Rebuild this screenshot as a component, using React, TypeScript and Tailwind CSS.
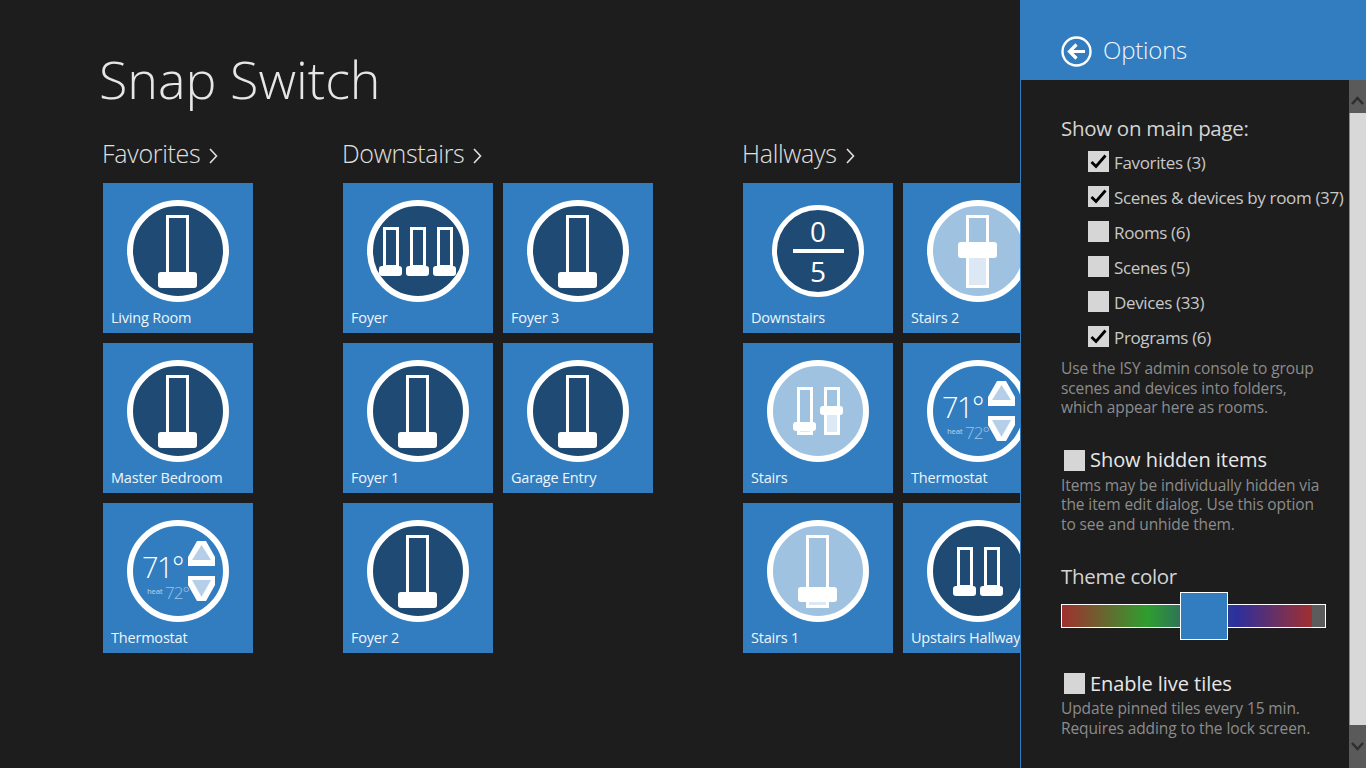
import React from 'react';

const BLUE = '#317dc0';
const DARK = '#1f4a73';
const LIGHT = '#a0c2e1';
const PALE = '#dce8f4';

type Slider = { x: number; w: number; top: number; bottom: number; hx: number; hw: number; hy: number; hh: number; fillBelow?: boolean };

// one track with its handle, in the 102x102 dial space
const Track = ({ s }: { s: Slider }) => (
    <>
        {s.fillBelow && <rect x={s.x} y={s.hy} width={s.w} height={s.bottom - s.hy} fill={PALE} />}
        <rect x={s.x + 1.5} y={s.top + 1.5} width={s.w - 3} height={s.bottom - s.top - 3} fill="none" stroke="#fff" strokeWidth="3" />
        <rect x={s.hx} y={s.hy} width={s.hw} height={s.hh} rx="3" fill="#fff" />
    </>
);

const Dial = ({ fill, children }: { fill: string; children?: React.ReactNode }) => (
    <svg width="102" height="102" viewBox="0 0 102 102" className="shrink-0">
        <circle cx="51" cy="51" r="48" fill={fill} stroke="#fff" strokeWidth="6" />
        {children}
    </svg>
);

const single = (extra: Partial<Slider>): Slider => ({ x: 39, w: 23, top: 15, bottom: 88, hx: 31, hw: 39, hy: 72, hh: 16, ...extra });
const small = (x: number, hy: number, hh: number, extra?: Partial<Slider>): Slider => ({
    x, w: 16, top: 27, bottom: 68, hx: x - 4, hw: 23, hy, hh, ...extra,
});

const SwitchOff = () => (
    <Dial fill={DARK}>
        <Track s={single({})} />
    </Dial>
);

const Triple = () => (
    <Dial fill={DARK}>
        <Track s={small(16, 66, 10)} />
        <Track s={{ ...small(43, 66, 10), hx: 39 }} />
        <Track s={small(70, 66, 10)} />
    </Dial>
);

const Double = () => (
    <Dial fill={DARK}>
        <Track s={small(30, 66, 10)} />
        <Track s={small(57, 66, 10)} />
    </Dial>
);

const Count = () => (
    <svg width="102" height="102" viewBox="0 0 102 102" className="shrink-0">
        <circle cx="51" cy="51" r="43.5" fill={DARK} stroke="#fff" strokeWidth="5" />
        <rect x="26" y="49" width="51" height="4" fill="#fff" />
        <text x="51" y="42" textAnchor="middle" fill="#fff" fontSize="28">0</text>
        <text x="51" y="82" textAnchor="middle" fill="#fff" fontSize="28">5</text>
    </svg>
);

const DimMid = () => (
    <Dial fill={LIGHT}>
        <Track s={single({ hy: 42, hh: 16, fillBelow: true })} />
    </Dial>
);

const DimLow = () => (
    <Dial fill={LIGHT}>
        <Track s={single({ hy: 67, hh: 15, fillBelow: true })} />
    </Dial>
);

const DimPair = () => (
    <Dial fill={LIGHT}>
        <Track s={{ ...small(30, 62, 9), bottom: 75, fillBelow: true }} />
        <Track s={{ ...small(57, 46, 9), bottom: 75, fillBelow: true }} />
    </Dial>
);

const Thermo = () => (
    <Dial fill={BLUE}>
        <text x="15" y="58" fill="#fff" fontSize="29" fontWeight="300" letterSpacing="-1.6">71°</text>
        <text x="20" y="74" fill={LIGHT} fontSize="7.5" fontWeight="600" letterSpacing="-0.2">heat</text>
        <text x="38" y="79" fill={LIGHT} fontSize="17" fontWeight="300" letterSpacing="-0.9">72°</text>
        <path d="M61 46 V37 L70 21 H79 L88 37 V46 Z" fill="#fff" />
        <path d="M65 40 H84 L74.5 25 Z" fill="#b5cfe8" />
        <path d="M61 56 V65 L70 81 H79 L88 65 V56 Z" fill="#fff" />
        <path d="M65 60 H84 L74.5 77 Z" fill="#b5cfe8" />
    </Dial>
);

const Tile = ({ label, icon }: { label: string; icon: React.ReactNode }) => (
    <div className="w-[150px] h-[150px] bg-[#317dc0] flex flex-col overflow-hidden">
        <div className="pl-6 pt-[17px] h-[125px]">{icon}</div>
        <div className="pl-2 text-[14.5px] leading-5 text-[#f0f5fa] whitespace-nowrap tracking-[-0.2px]">{label}</div>
    </div>
);

const groups = [
    {
        name: 'Favorites',
        cols: 'grid-cols-[150px]',
        tiles: [
            { label: 'Living Room', icon: <SwitchOff /> },
            { label: 'Master Bedroom', icon: <SwitchOff /> },
            { label: 'Thermostat', icon: <Thermo /> },
        ],
    },
    {
        name: 'Downstairs',
        cols: 'grid-cols-[150px_150px]',
        tiles: [
            { label: 'Foyer', icon: <Triple /> },
            { label: 'Foyer 3', icon: <SwitchOff /> },
            { label: 'Foyer 1', icon: <SwitchOff /> },
            { label: 'Garage Entry', icon: <SwitchOff /> },
            { label: 'Foyer 2', icon: <SwitchOff /> },
        ],
    },
    {
        name: 'Hallways',
        cols: 'grid-cols-[150px_150px]',
        tiles: [
            { label: 'Downstairs', icon: <Count /> },
            { label: 'Stairs 2', icon: <DimMid /> },
            { label: 'Stairs', icon: <DimPair /> },
            { label: 'Thermostat', icon: <Thermo /> },
            { label: 'Stairs 1', icon: <DimLow /> },
            { label: 'Upstairs Hallway', icon: <Double /> },
        ],
    },
];

const Box = ({ checked }: { checked?: boolean }) => (
    <span className="w-[21px] h-[21px] bg-[#d6d6d6] shrink-0 flex items-center justify-center">
        {checked && (
            <svg width="17" height="15" viewBox="0 0 17 15">
                <path d="M1.5 8 L6 12.5 L15.5 1.5" fill="none" stroke="#000" strokeWidth="2.8" />
            </svg>
        )}
    </span>
);

const options = [
    { label: 'Favorites (3)', checked: true },
    { label: 'Scenes & devices by room (37)', checked: true },
    { label: 'Rooms (6)' },
    { label: 'Scenes (5)' },
    { label: 'Devices (33)' },
    { label: 'Programs (6)', checked: true },
];

const Note = ({ lines, className }: { lines: string[]; className?: string }) => (
    <div className={`text-[15.5px] leading-[19.5px] text-[#8c8c8c] tracking-[-0.1px] whitespace-nowrap ${className ?? ''}`}>
        {lines.map((l) => (
            <div key={l}>{l}</div>
        ))}
    </div>
);

const Chevron = ({ up }: { up?: boolean }) => (
    <svg width="13" height="9" viewBox="0 0 13 9">
        <path d={up ? 'M1 8 L6.5 2 L12 8' : 'M1 1 L6.5 7 L12 1'} fill="none" stroke="#2e2e2e" strokeWidth="2.5" />
    </svg>
);

export default function App() {
    return (
        <div className="flex w-[1366px] h-[768px] overflow-hidden bg-[#1d1d1d] font-['Open_Sans','Liberation_Sans',sans-serif]">
            <main className="w-[1020px] shrink-0 overflow-hidden pl-[103px] pt-[40px]">
                <h1 className="-ml-[4px] text-[52px] leading-[78px] font-light text-[#e6e6e6] whitespace-nowrap">Snap Switch</h1>
                <div className="flex gap-[90px] mt-[16px] w-[1200px]">
                    {groups.map((g) => (
                        <section key={g.name}>
                            <div className="flex items-center gap-[9px] h-[40px] mb-[9px] -ml-px text-[#e0e0e0] text-[25px] font-light tracking-[-0.3px]">
                                {g.name}
                                <svg width="9" height="16" viewBox="0 0 9 16" className="mt-1">
                                    <path d="M1 1 L7.5 8 L1 15" fill="none" stroke="#e0e0e0" strokeWidth="1.6" />
                                </svg>
                            </div>
                            <div className={`grid ${g.cols} gap-[10px]`}>
                                {g.tiles.map((t) => (
                                    <Tile key={t.label} label={t.label} icon={t.icon} />
                                ))}
                            </div>
                        </section>
                    ))}
                </div>
            </main>

            <aside className="w-[346px] shrink-0 flex flex-col">
                <header className="h-20 bg-[#317dc0] flex items-center gap-[11px] pl-[41px] pt-[22px] shrink-0">
                    <svg width="31" height="31" viewBox="0 0 31 31">
                        <circle cx="15.5" cy="15.5" r="14" fill="none" stroke="#fff" strokeWidth="2.4" />
                        <path d="M24 15.5 H9 M15.5 8.5 L8.5 15.5 L15.5 22.5" fill="none" stroke="#fff" strokeWidth="3.2" />
                    </svg>
                    <span className="text-[24px] leading-[30px] -mt-[3px] text-[#f0f5fa] font-light tracking-[-0.2px]">Options</span>
                </header>

                <div className="flex flex-1 min-h-0 border-l border-[#317dc0]">
                    <div className="flex-1 min-w-0 pl-10 pt-[34px] overflow-hidden">
                        <div className="text-[20.5px] leading-[28px] text-[#d4d4d4] tracking-[-0.3px]">Show on main page:</div>
                        <div className="flex flex-col gap-[14px] mt-[9px] pl-[27px]">
                            {options.map((o) => (
                                <div key={o.label} className="flex items-center gap-[5px] h-[21px] text-[17px] text-[#c8c8c8] tracking-[-0.35px] whitespace-nowrap">
                                    <Box checked={o.checked} />
                                    <span className="pt-0.5">{o.label}</span>
                                </div>
                            ))}
                        </div>
                        <Note className="mt-[12px]" lines={['Use the ISY admin console to group', 'scenes and devices into folders,', 'which appear here as rooms.']} />

                        <div className="flex items-center gap-[5px] h-[21px] mt-[32px] pl-[3px] text-[20px] text-[#e8e8e8] tracking-[-0.05px] whitespace-nowrap">
                            <Box />
                            Show hidden items
                        </div>
                        <Note className="mt-[5px]" lines={['Items may be individually hidden via', 'the item edit dialog. Use this option', 'to see and unhide them.']} />

                        <div className="text-[20.5px] leading-[28px] mt-[28px] text-[#d4d4d4] tracking-[-0.3px]">Theme color</div>
                        <div className="relative w-[265px] h-[24px] mt-[14px] border border-white bg-[linear-gradient(to_right,#a03030_0px,#2f9e2f_85px,#2c2f9e_174px,#a03030_250px,#5c5c5c_250px)]">
                            <div className="absolute left-[118px] -top-[13px] w-[48px] h-[48px] bg-[#317dc0] border border-white" />
                        </div>

                        <div className="flex items-center gap-[5px] h-[21px] mt-[45px] pl-[3px] text-[20px] text-[#e8e8e8] tracking-[-0.05px] whitespace-nowrap">
                            <Box />
                            Enable live tiles
                        </div>
                        <Note className="mt-[5px]" lines={['Update pinned tiles every 15 min.', 'Requires adding to the lock screen.']} />
                    </div>

                    <div className="w-[17px] shrink-0 flex flex-col bg-[#5a5a5a]">
                        <div className="h-[33px] flex items-center justify-center pt-2">
                            <Chevron up />
                        </div>
                        <div className="h-[612px] bg-[#d8d8d8] border-l border-[#8a8a8a]" />
                        <div className="flex-1 flex items-center justify-center">
                            <Chevron />
                        </div>
                    </div>
                </div>
            </aside>
        </div>
    );
}
